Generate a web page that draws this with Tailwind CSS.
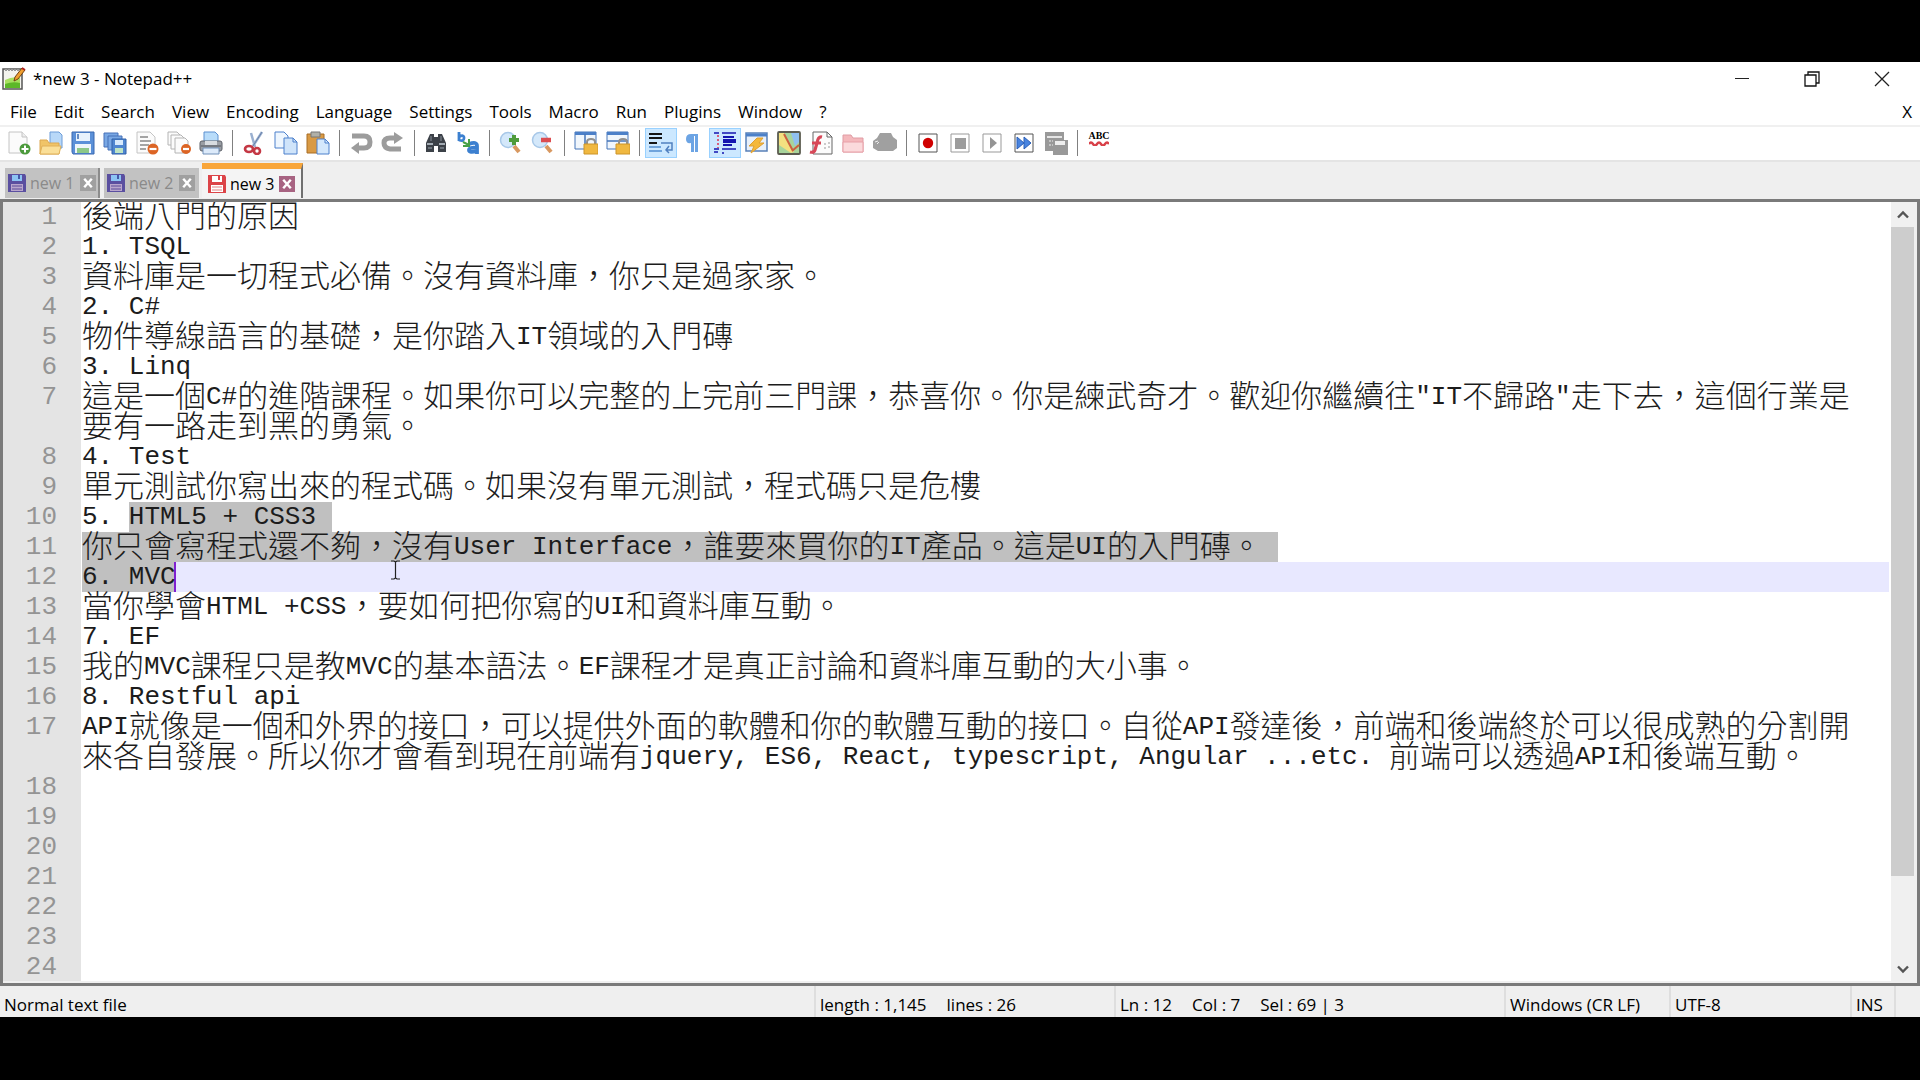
<!DOCTYPE html>
<html lang="zh-Hant">
<head>
<meta charset="utf-8">
<title>*new 3 - Notepad++</title>
<script src="https://cdn.jsdelivr.net/npm/@tailwindcss/browser@4"></script>
</head>
<body class="flex h-screen flex-col bg-black pt-[62px] pb-[63px] font-['Open_Sans','Noto_Sans',sans-serif] text-[17px] text-black">
<svg class="hidden" aria-hidden="true">
  <symbol id="disk" viewBox="0 0 20 20"><path d="M1 1h17l1 2v16H1z" fill="currentColor"/><path d="M5 2h10v6H5z" fill="#8cc4f4"/><path d="M11 2h2v4h-2z" fill="#4458a8"/><path d="M4 11h12v7H4z" fill="#b9a6cc"/><path d="M5 13h10M5 16h10" stroke="#5a4a98"/></symbol>
  <symbol id="cross" viewBox="0 0 17 17"><path d="M4.500 4l8 9M12.500 4l-8 9" stroke="#fff" stroke-width="2.600"/></symbol>
</svg>

<div class="flex min-h-0 flex-1 flex-col bg-white">
  <!-- Title bar -->
  <header class="flex h-9 items-center pb-[2px]">
    <svg class="ml-[2px] h-6 w-6" viewBox="0 0 24 24"><path d="M1 2h19v20H1z" fill="#f4f4ee" stroke="#555" stroke-width="1.500"/><path d="M3 13q8-4 15-2v10H3z" fill="#a8e060"/><path d="M3 17q8-3 15-1v5H3z" fill="#5cb828"/><path d="M3 3h14" stroke="#999" stroke-width="2" stroke-dasharray="2 1"/><path d="M12 14l1-4 7-9 3 2-7 9z" fill="#f0a030" stroke="#704010"/><path d="M20 1l3 2" stroke="#b02020" stroke-width="2"/></svg>
    <h1 class="ml-[7px] flex-1 text-[17px]">*new 3 - Notepad++</h1>
    <button class="flex h-full w-[70px] items-center justify-center" aria-label="Minimize"><svg class="h-4 w-4" viewBox="0 0 16 16"><path d="M1 7.500h14" stroke="#222"/></svg></button>
    <button class="flex h-full w-[70px] items-center justify-center" aria-label="Restore"><svg class="h-4 w-4" viewBox="0 0 16 16" fill="none" stroke="#111" stroke-width="1.300"><path d="M1 4h11v11H1zM4 4V1h11v11h-3"/></svg></button>
    <button class="mr-[3px] flex h-full w-[70px] items-center justify-center" aria-label="Close"><svg class="h-4 w-4" viewBox="0 0 16 16"><path d="M1 1l14 14M15 1L1 15" stroke="#222" stroke-width="1.300"/></svg></button>
  </header>

  <!-- Menu bar -->
  <nav class="flex h-[29px] items-center gap-[17px] border-b-2 border-[#f0f0f0] pr-2 pl-[10px]">
    <button>File</button><button>Edit</button><button>Search</button><button>View</button><button>Encoding</button><button>Language</button><button>Settings</button><button>Tools</button><button>Macro</button><button>Run</button><button>Plugins</button><button>Window</button><button>?</button>
    <button class="ml-auto" aria-label="Close document">X</button>
  </nav>

  <!-- Toolbar -->
  <div role="toolbar" class="flex h-[33px] items-center pb-[2px] pl-[3px] [&>button]:flex [&>button]:h-[30px] [&>button]:w-8 [&>button]:items-center [&>button]:justify-center [&>i]:mx-[5px] [&>i]:h-[26px] [&>i]:w-px [&>i]:bg-[#808080] [&_svg]:h-6 [&_svg]:w-6">
    <button aria-label="New"><svg viewBox="0 0 24 24"><path d="M2 1h13l5 5v16H2z" fill="#fbfbfb" stroke="#c4c4c4"/><path d="M15 1v5h5" fill="#eee" stroke="#c4c4c4"/><circle cx="18" cy="18" r="5.500" fill="#4c9a3c"/><path d="M18 14.500v7M14.500 18h7" stroke="#fff" stroke-width="2"/></svg></button>
    <button aria-label="Open"><svg viewBox="0 0 24 24"><path d="M11 1h9l3 3v13H11z" fill="#b8d8f8" stroke="#6c9cd8"/><path d="M1 9h7l2 3h10v11H1z" fill="#f0c468" stroke="#dca850"/><path d="M1 23l2-8h19l-2 8z" fill="#fadf98" stroke="#e0b058"/></svg></button>
    <button aria-label="Save"><svg viewBox="0 0 24 24"><path d="M1 1h22v22H2l-1-2z" fill="#5b90d8" stroke="#3a68b0"/><path d="M5 2h14v8H5z" fill="#e8f2fc"/><path d="M7 3v5" stroke="#3a68b0" stroke-width="1.500"/><path d="M4 13h16v9H4z" fill="#eef5fa"/><path d="M6 17h12v5H6z" fill="#8cc888"/></svg></button>
    <button aria-label="Save all"><svg viewBox="0 0 24 24"><path d="M1 2h14v14H1z" fill="#79a8e4" stroke="#4670b8"/><path d="M5 5h14v14H5z" fill="#79a8e4" stroke="#4670b8"/><path d="M9 8h14v15H9z" fill="#4f86d0" stroke="#3060a8"/><path d="M12 9h8v5h-8z" fill="#d8eafc"/><path d="M12 17h8v5h-8z" fill="#bfe4c4"/></svg></button>
    <button aria-label="Close"><svg viewBox="0 0 24 24"><path d="M2 1h13l5 5v16H2z" fill="#fbfbfb" stroke="#c4c4c4"/><path d="M5 6h8M5 10h11M5 14h9M5 18h6" stroke="#888" stroke-width="1.300"/><circle cx="18" cy="18" r="5.500" fill="#dc6424"/><path d="M14.500 18h7" stroke="#fff" stroke-width="2.200"/></svg></button>
    <button aria-label="Close all"><svg viewBox="0 0 24 24" fill="#fbfbfb" stroke="#b4b4b4"><path d="M1 1h9l3 3v10H1z"/><path d="M4 4h10l3 3v11H4z"/><path d="M8 7h10l3 3v12H8z"/><circle cx="19" cy="18" r="5" fill="#dc6424" stroke="none"/><path d="M16 18h6" stroke="#fff" stroke-width="2.200"/></svg></button>
    <button aria-label="Print"><svg viewBox="0 0 24 24"><path d="M5 1h11l3 3v9H5z" fill="#b8dcfa" stroke="#5c90d0"/><rect x="1" y="10" width="22" height="10" rx="2" fill="#9a9ea4" stroke="#5c6068"/><path d="M6 10h12v4H6z" fill="#d8dce0"/><path d="M4 17h16v6H4z" fill="#dceafa" stroke="#7090b8"/><path d="M2 15h20" stroke="#50545c"/></svg></button>
    <i></i>
    <button aria-label="Cut"><svg viewBox="0 0 24 24"><path d="M9 2l4 14M20 1l-9 14" stroke="#9ab0d0" stroke-width="2.500"/><path d="M20 1l-9 14" stroke="#6880a8"/><ellipse cx="7" cy="18" rx="4" ry="3" fill="none" stroke="#c43844" stroke-width="2.600"/><ellipse cx="15" cy="20" rx="3" ry="3" fill="none" stroke="#c43844" stroke-width="2.600"/></svg></button>
    <button aria-label="Copy"><svg viewBox="0 0 24 24" stroke="#4c80cc"><path d="M1 1h9l4 4v12H1z" fill="#eef6fe"/><path d="M10 7h9l4 4v12H10z" fill="#cfe4fa"/><path d="M19 7v4h4" fill="none"/></svg></button>
    <button aria-label="Paste"><svg viewBox="0 0 24 24"><path d="M1 3h17v19H1z" fill="#d99a44" stroke="#a86c24"/><path d="M5 1h9v5H5z" fill="#b0b0a8" stroke="#777"/><path d="M11 8h8l4 4v11H11z" fill="#d4e8fc" stroke="#4c80cc"/><path d="M19 8v4h4" fill="none" stroke="#4c80cc"/></svg></button>
    <i></i>
    <button aria-label="Undo"><svg viewBox="0 0 24 24"><path d="M3 5h12q6 0 6 6t-6 6H9" fill="none" stroke="#9c9c9c" stroke-width="5"/><path d="M10 11v12l-8-6z" fill="#9c9c9c"/></svg></button>
    <button aria-label="Redo"><svg viewBox="0 0 24 24"><path d="M14 7H9q-6 0-6 5t6 6h11" fill="none" stroke="#9c9c9c" stroke-width="5"/><path d="M13 1v12l9-6z" fill="#9c9c9c"/></svg></button>
    <i></i>
    <button aria-label="Find"><svg viewBox="0 0 24 24"><path d="M6 3h4v3h4V3h4l4 9v9h-8v-6h-4v6H2v-9z" fill="#3c4148"/><path d="M3 13h6M15 13h6" stroke="#a4acb4" stroke-width="2"/><path d="M7 5v5M17 5v5" stroke="#889098"/><path d="M4 17h4M16 17h4" stroke="#6c747c" stroke-width="2"/></svg></button>
    <button aria-label="Replace"><svg viewBox="0 0 24 24" fill="none"><path d="M3 1v9M3 6q5-3 5 1t-5 2" stroke="#3c80d0" stroke-width="2.800"/><path d="M13 13q8-3 8 2v8M21 17q-8-1-8 2t8 1" stroke="#3c80d0" stroke-width="3.800"/><path d="M7 11l6 3M13 8v7H7" stroke="#46a046" stroke-width="2"/></svg></button>
    <i></i>
    <button aria-label="Zoom in"><svg viewBox="0 0 24 24"><path d="M15 15l5 6" stroke="#d89860" stroke-width="4"/><circle cx="9" cy="9" r="7.500" fill="#d4e8fa" stroke="#a8c8e8" stroke-width="1.500"/><path d="M15 4v10M10 9h10" stroke="#4f9c3c" stroke-width="4"/></svg></button>
    <button aria-label="Zoom out"><svg viewBox="0 0 24 24"><path d="M15 15l5 6" stroke="#d89860" stroke-width="4"/><circle cx="9" cy="9" r="7.500" fill="#d4e8fa" stroke="#a8c8e8" stroke-width="1.500"/><path d="M10 9h10" stroke="#dc4c50" stroke-width="4.500"/></svg></button>
    <i></i>
    <button aria-label="Synchronize vertical scrolling"><svg viewBox="0 0 24 24"><path d="M1 1h21v17H1z" fill="#f0f6fc" stroke="#4474b8"/><path d="M1 2.500h21" stroke="#4c80c8" stroke-width="3"/><path d="M11 3v14" stroke="#4474b8" stroke-width="1.500"/><path d="M13 14v-3q0-3 4-3t4 3v3" fill="none" stroke="#909090" stroke-width="2"/><path d="M10 13h14v10H10z" fill="#f0b840" stroke="#cc9428"/></svg></button>
    <button aria-label="Synchronize horizontal scrolling"><svg viewBox="0 0 24 24"><path d="M1 1h21v17H1z" fill="#f0f6fc" stroke="#4474b8"/><path d="M1 2.500h21" stroke="#4c80c8" stroke-width="3"/><path d="M1 10h21" stroke="#4474b8" stroke-width="1.500"/><path d="M13 14v-3q0-3 4-3t4 3v3" fill="none" stroke="#909090" stroke-width="2"/><path d="M10 13h14v10H10z" fill="#f0b840" stroke="#cc9428"/></svg></button>
    <i></i>
    <button class="border border-[#99d1ff] bg-[#cce8ff]" aria-label="Word wrap" aria-pressed="true"><svg viewBox="0 0 24 24" fill="none"><path d="M0 3h13M0 7h13M0 12h8" stroke="#151515" stroke-width="2"/><path d="M12 12h11v7h-5M20 15l-3 4 3 3" stroke="#5080c0" stroke-width="1.500"/><path d="M0 16h12M0 20h13" stroke="#70a4dc" stroke-width="2"/></svg></button>
    <button aria-label="Show all characters"><svg viewBox="0 0 24 24"><path d="M17 3H10q-5 0-5 5t5 4v9h3V5h1v16h3z" fill="#6ca4e4"/></svg></button>
    <button class="border border-[#99d1ff] bg-[#cce8ff]" aria-label="Show indent guide" aria-pressed="true"><svg viewBox="0 0 24 24" stroke="#1414b0"><path d="M1 2h5M9 2h14M1 18h5M9 18h14M1 21h4M9 22h2" stroke-width="1.500"/><path d="M10 6h11M10 14h9" stroke-width="2"/><path d="M10 10h13" stroke-width="4"/><path d="M5 4v13" stroke="#e03050" stroke-width="1.500" stroke-dasharray="2 2"/></svg></button>
    <button aria-label="User defined language"><svg viewBox="0 0 24 24"><path d="M1 2h21v18H1z" fill="#e8f0fa" stroke="#5880b8" stroke-width="1.500"/><path d="M1 4h21" stroke="#4c80c8" stroke-width="3"/><path d="M12 7h6l-4 5h5L6 22l3-7H4z" fill="#f4b83c" stroke="#e0a030"/></svg></button>
    <button aria-label="Document map"><svg viewBox="0 0 24 24"><rect x="1" y="1" width="22" height="22" rx="1" fill="#a8d49c" stroke="#5c5c50" stroke-width="1.800"/><path d="M14 2h8v9l-4 4z" fill="#90c0f0"/><path d="M2 2h5l10 19-3 1L2 14z" fill="#f4e080"/><path d="M7 3l9 17M22 14l-7 6" stroke="#cc6040" stroke-width="2" fill="none"/></svg></button>
    <button aria-label="Function list"><svg viewBox="0 0 24 24"><path d="M4 1h14l5 5v17H4z" fill="#fcfcfc" stroke="#666"/><path d="M18 1v5h5" fill="none" stroke="#666"/><path d="M13 6q-4-1-5 6l-2 7q-1 3-5 2M3 12h9" stroke="#d84858" stroke-width="3.200" fill="none"/><path d="M16 12v7M20 11v7" stroke="#999" stroke-dasharray="2 2"/></svg></button>
    <button aria-label="Folder as workspace"><svg viewBox="0 0 24 24"><path d="M2 4h8l2 3h10v14H2z" fill="#f4b8bc" stroke="#e09ca4"/><path d="M2 21V11h20v10z" fill="#fbdadc" stroke="#e8a0a8"/></svg></button>
    <button aria-label="Monitoring" disabled><svg viewBox="0 0 24 24"><path d="M0 10l4-3 3-5h11l2 4 4 3v8l-4 3H5l-5-3z" fill="#a0a0a0"/><path d="M2 11l3-1M4 13l2-2" stroke="#eee"/></svg></button>
    <i></i>
    <button aria-label="Record macro"><svg viewBox="0 0 24 24"><path d="M3 3h18v18H3z" fill="#fff" stroke="#555"/><circle cx="12" cy="12" r="5.200" fill="#d00000"/></svg></button>
    <button aria-label="Stop recording" disabled><svg viewBox="0 0 24 24"><path d="M3 3h18v18H3z" fill="#fff" stroke="#999"/><path d="M7 7h11v11H7z" fill="#9c9c9c"/></svg></button>
    <button aria-label="Play macro" disabled><svg viewBox="0 0 24 24"><path d="M3 3h18v18H3z" fill="#fff" stroke="#999"/><path d="M10 6l7 6-7 6z" fill="#949494"/></svg></button>
    <button aria-label="Run macro multiple times"><svg viewBox="0 0 24 24"><path d="M3 3h18v18H3z" fill="#fff" stroke="#555"/><path d="M5 6l7 6-7 6zM12 6l7 6-7 6z" fill="#4884e0" stroke="#2c60b8"/></svg></button>
    <button aria-label="Save macro" disabled><svg viewBox="0 0 24 24"><path d="M1 1h19v19H1z" fill="#999"/><path d="M3 6h15" stroke="#fff" stroke-width="1.500"/><path d="M5 10h5M5 14h5" stroke="#eee" stroke-dasharray="2 1"/><path d="M9 9h15v15H9z" fill="#999"/><path d="M11 10h10v4H11z" fill="#eee"/></svg></button>
    <i></i>
    <button aria-label="Spell check"><span class="flex flex-col items-center pb-2"><span class="font-['Liberation_Serif',serif] text-[10px] leading-[10px] font-bold">ABC</span><svg class="!h-[5px] !w-5" viewBox="0 0 20 5"><path d="M0 3q2-3 4 0t4 0 4 0 4 0 4 0" fill="none" stroke="#d84048" stroke-width="2.400"/></svg></span></button>
  </div>

  <!-- Document tabs -->
  <div role="tablist" class="flex h-[39px] items-end border-t-2 border-[#e4e4e4] bg-[#efefef] pb-px pl-[5px]">
    <div role="tab" class="mr-1 flex h-[30px] w-[95px] items-center border-r-2 border-r-[#8c8c8c] bg-[#c2c2c2] pl-[2px] text-[16px] text-[#8a8a8a]"><svg class="h-5 w-5 text-[#5a4fa0]"><use href="#disk"/></svg><span class="ml-[3px] flex-1">new 1</span><button class="mr-[2px] h-4 w-4 bg-[#a0a0a0]" aria-label="Close new 1"><svg class="h-4 w-4"><use href="#cross"/></svg></button></div>
    <div role="tab" class="mr-[3px] flex h-[30px] w-[95px] items-center bg-[#c2c2c2] pl-[2px] text-[16px] text-[#8a8a8a]"><svg class="h-5 w-5 text-[#5a4fa0]"><use href="#disk"/></svg><span class="ml-[3px] flex-1">new 2</span><button class="mr-1 h-4 w-4 bg-[#a0a0a0]" aria-label="Close new 2"><svg class="h-4 w-4"><use href="#cross"/></svg></button></div>
    <div role="tab" aria-selected="true" class="flex h-[35px] w-[101px] items-center border-t-[6px] border-r-2 border-t-[#f9a63a] border-r-[#707070] bg-[#f4f4f4] pl-[5px] text-[16px]"><svg class="h-5 w-5" viewBox="0 0 20 20"><path d="M1 1h17l1 2v16H1z" fill="#dc4448"/><path d="M5 2h10v6H5z" fill="#fff"/><path d="M11 2h2v4h-2z" fill="#dc4448"/><path d="M4 11h12v7H4z" fill="#fff"/><path d="M5 13h10M5 16h10" stroke="#e08080"/></svg><span class="ml-[3px] flex-1">new 3</span><button class="mr-[6px] h-4 w-4 bg-[#a86482]" aria-label="Close new 3"><svg class="h-4 w-4"><use href="#cross"/></svg></button></div>
  </div>

  <!-- Editor -->
  <div class="flex min-h-0 flex-1 border-t-3 border-r-3 border-b-3 border-l-3 border-[#7a7a7a] bg-[#f0f0f0] pr-[3px] pb-[2px]">
    <main id="editor" class="relative min-w-0 flex-1 overflow-hidden bg-white pr-[2px] font-['Liberation_Mono','Noto_Sans_CJK_TC',monospace] text-[26px] leading-[30px] text-[#1c1c1c] [&>div]:flex [&>div>b]:w-[78px] [&>div>b]:shrink-0 [&>div>b]:bg-[#e4e4e4] [&>div>b]:pr-6 [&>div>b]:text-right [&>div>b]:font-normal [&>div>b]:text-[#949494] [&>div>p]:ml-px [&>div>p]:min-h-[30px] [&>div>p]:flex-1 [&>div>p]:pr-6 [&>div>p]:break-all [&_mark]:inline-block [&_mark]:h-[30px] [&_mark]:bg-[#c0c0c0] [&_mark]:align-top [&_mark]:text-[#1c1c1c]">
      <div><b>1</b><p>後端八門的原因</p></div>
      <div><b>2</b><p>1. TSQL</p></div>
      <div><b>3</b><p>資料庫是一切程式必備。沒有資料庫，你只是過家家。</p></div>
      <div><b>4</b><p>2. C#</p></div>
      <div><b>5</b><p>物件導線語言的基礎，是你踏入IT領域的入門磚</p></div>
      <div><b>6</b><p>3. Linq</p></div>
      <div><b>7</b><p>這是一個C#的進階課程。如果你可以完整的上完前三門課，恭喜你。你是練武奇才。歡迎你繼續往"IT不歸路"走下去，這個行業是要有一路走到黑的勇氣。</p></div>
      <div><b>8</b><p>4. Test</p></div>
      <div><b>9</b><p>單元測試你寫出來的程式碼。如果沒有單元測試，程式碼只是危樓</p></div>
      <div><b>10</b><p>5. <mark class="pr-4">HTML5 + CSS3</mark></p></div>
      <div><b>11</b><p><mark class="pr-4">你只會寫程式還不夠，沒有User Interface，誰要來買你的IT產品。這是UI的入門磚。</mark></p></div>
      <div><b>12</b><p class="bg-[#e8e8ff]"><mark class="shadow-[inset_-2px_0_#8020d0]">6. MVC</mark></p></div>
      <div><b>13</b><p>當你學會HTML +CSS，要如何把你寫的UI和資料庫互動。</p></div>
      <div><b>14</b><p>7. EF</p></div>
      <div><b>15</b><p>我的MVC課程只是教MVC的基本語法。EF課程才是真正討論和資料庫互動的大小事。</p></div>
      <div><b>16</b><p>8. Restful api</p></div>
      <div><b>17</b><p>API就像是一個和外界的接口，可以提供外面的軟體和你的軟體互動的接口。自從API發達後，前端和後端終於可以很成熟的分割開來各自發展。所以你才會看到現在前端有jquery, ES6, React, typescript, Angular ...etc. 前端可以透過API和後端互動。</p></div>
      <div><b>18</b><p></p></div>
      <div><b>19</b><p></p></div>
      <div><b>20</b><p></p></div>
      <div><b>21</b><p></p></div>
      <div><b>22</b><p></p></div>
      <div><b>23</b><p></p></div>
      <div><b>24</b><p></p></div>
      <svg class="absolute top-[358px] left-[387px] h-5 w-[11px]" viewBox="0 0 11 20" fill="none" stroke="#222" stroke-width="1.200"><path d="M1 1h3l1.500 1L7 1h3M5.500 2v16M1 19h3l1.500-1L7 19h3"/></svg>
    </main>
    <!-- Vertical scrollbar -->
    <div class="flex w-[23px] flex-col">
      <button class="flex h-[25px] items-center justify-center" aria-label="Scroll up"><svg class="h-3 w-3" viewBox="0 0 12 12"><path d="M1 8.500l5-5 5 5" fill="none" stroke="#555" stroke-width="2.400"/></svg></button>
      <div class="flex-1"><div class="h-[89%] bg-[#cdcdcd]"></div></div>
      <button class="flex h-[25px] items-center justify-center" aria-label="Scroll down"><svg class="h-3 w-3" viewBox="0 0 12 12"><path d="M1 3.500l5 5 5-5" fill="none" stroke="#555" stroke-width="2.400"/></svg></button>
    </div>
  </div>

  <!-- Status bar -->
  <footer class="flex h-[31px] bg-[#efefef] [&>div]:flex [&>div]:items-center [&>div]:gap-5 [&>div]:border-r-2 [&>div]:border-[#dedede] [&>div]:pt-[6px] [&>div]:pl-1">
    <div class="flex-1"><span>Normal text file</span></div>
    <div class="w-[300px]"><span>length : 1,145</span><span>lines : 26</span></div>
    <div class="w-[390px]"><span>Ln : 12</span><span>Col : 7</span><span>Sel : 69 | 3</span></div>
    <div class="w-[165px]"><span>Windows (CR LF)</span></div>
    <div class="w-[181px]"><span>UTF-8</span></div>
    <div class="mr-6 w-11"><span>INS</span></div>
  </footer>
</div>

<script>
// East Asian runs fill two columns of the Latin font, so they get their own size.
const walker = document.createTreeWalker(document.getElementById('editor'), NodeFilter.SHOW_TEXT);
const nodes = [];
while (walker.nextNode()) nodes.push(walker.currentNode);
for (const node of nodes) {
  const parts = node.data.split(/([\u3000-\u9fff\uff00-\uffef]+)/);
  if (parts.length < 2) continue;
  node.replaceWith(...parts.filter(Boolean).map(text => {
    if (!/[\u3000-\u9fff\uff00-\uffef]/.test(text)) return text;
    const span = document.createElement('span');
    span.className = "font-['Noto_Sans_CJK_TC',sans-serif] font-light text-[31px] leading-[0] align-[-3px]";
    span.textContent = text;
    return span;
  }));
}
</script>
</body>
</html>
